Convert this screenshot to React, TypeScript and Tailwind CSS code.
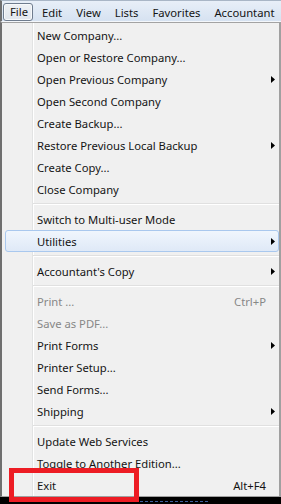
import React from 'react';

type Item =
  | { kind: 'sep' }
  | { kind: 'item'; label: string; shortcut?: string; sub?: boolean; disabled?: boolean; active?: boolean };

const items: Item[] = [
  { kind: 'item', label: 'New Company...' },
  { kind: 'item', label: 'Open or Restore Company...' },
  { kind: 'item', label: 'Open Previous Company', sub: true },
  { kind: 'item', label: 'Open Second Company' },
  { kind: 'item', label: 'Create Backup...' },
  { kind: 'item', label: 'Restore Previous Local Backup', sub: true },
  { kind: 'item', label: 'Create Copy...' },
  { kind: 'item', label: 'Close Company' },
  { kind: 'sep' },
  { kind: 'item', label: 'Switch to Multi-user Mode' },
  { kind: 'item', label: 'Utilities', sub: true, active: true },
  { kind: 'sep' },
  { kind: 'item', label: "Accountant's Copy", sub: true },
  { kind: 'sep' },
  { kind: 'item', label: 'Print ...', shortcut: 'Ctrl+P', disabled: true },
  { kind: 'item', label: 'Save as PDF...', disabled: true },
  { kind: 'item', label: 'Print Forms', sub: true },
  { kind: 'item', label: 'Printer Setup...' },
  { kind: 'item', label: 'Send Forms...' },
  { kind: 'item', label: 'Shipping', sub: true },
  { kind: 'sep' },
  { kind: 'item', label: 'Update Web Services' },
  { kind: 'item', label: 'Toggle to Another Edition...' },
  { kind: 'item', label: 'Exit', shortcut: 'Alt+F4' },
];

const Arrow = () => (
  <svg width="4" height="7" viewBox="0 0 4 7" className="block">
    <polygon points="0,0 4,3.5 0,7" fill="#000" />
  </svg>
);

const MenuRow: React.FC<{ item: Extract<Item, { kind: 'item' }> }> = ({ item }) => {
  const box = item.active
    ? 'ml-[3px] pl-[31px] pr-[3px] border border-[#a9c8ee] rounded-[3px] bg-gradient-to-b from-[#f0f6fd] to-[#dfe9f7]'
    : 'pl-[35px] pr-[4px]';
  return (
    <div className="h-[22px] flex">
      <div className={`flex-1 flex items-center pt-[1px] ${box} ${item.disabled ? 'text-[#878787]' : 'text-[#141414]'}`}>
        <span className="flex-1 whitespace-nowrap">{item.label}</span>
        {item.shortcut && <span className="whitespace-nowrap">{item.shortcut}</span>}
        <span className="w-[9px] flex justify-end">{item.sub && <Arrow />}</span>
      </div>
    </div>
  );
};

export default function App() {
  const topMenus = ['Edit', 'View', 'Lists', 'Favorites', 'Accountant'];

  return (
    <div className="w-[281px] h-[504px] flex flex-col bg-black overflow-hidden relative font-['Noto_Sans',sans-serif] text-[11.25px] leading-none">
      {/* Menu bar */}
      <div className="h-[22px] flex items-start pt-[3px] border-t border-t-[#a9b6c6] border-l-2 border-l-[#6f6f6f] border-b border-b-[#f4f7fb] bg-gradient-to-b from-[#e8eff8] to-[#d6e2f1] text-[#141414]">
        <div className="ml-[1px] w-[30px] h-[18px] -mt-[1px] flex items-center justify-center pl-[2px] rounded-[3px] border border-[#6f7c8e] bg-gradient-to-b from-[#eef1f5] to-[#e1e6ed] shadow-[inset_0_0_0_1px_#f7f9fb]">
          File
        </div>
        <div className="ml-[9px] flex gap-[14px] h-[17px] items-center">
          {topMenus.map(m => (
            <span key={m} className="whitespace-nowrap">{m}</span>
          ))}
        </div>
      </div>

      {/* Dropdown */}
      <div className="h-[475px] pt-[1px] border-t border-t-[#a3a3a3] border-l-2 border-l-[#6f6f6f] border-r-2 border-r-[#a0a0a0] border-b border-b-[#a0a0a0] bg-[linear-gradient(to_right,#f0f0f0_30px,#e2e3e3_30px,#e2e3e3_31px,#ffffff_31px,#ffffff_32px,#f0f0f0_32px)]">
        {items.map((item, i) =>
          item.kind === 'sep' ? (
            <div key={i} className="h-[8px] pt-[3px] pl-[31px]">
              <div className="h-[2px] border-t border-t-[#e0e0e0] border-b border-b-white" />
            </div>
          ) : (
            <MenuRow key={i} item={item} />
          )
        )}
      </div>

      {/* strip below the menu */}
      <div className="flex-1 flex items-end pb-[1px]">
        <div className="ml-[140px] w-[68px] h-[2px] border-t border-dashed border-t-[#3c5f9e]" />
      </div>

      {/* red highlight around Exit */}
      <div className="absolute left-[9px] top-[468px] w-[130px] h-[34px] border-[5px] border-[#ed1c24]" />
    </div>
  );
}
